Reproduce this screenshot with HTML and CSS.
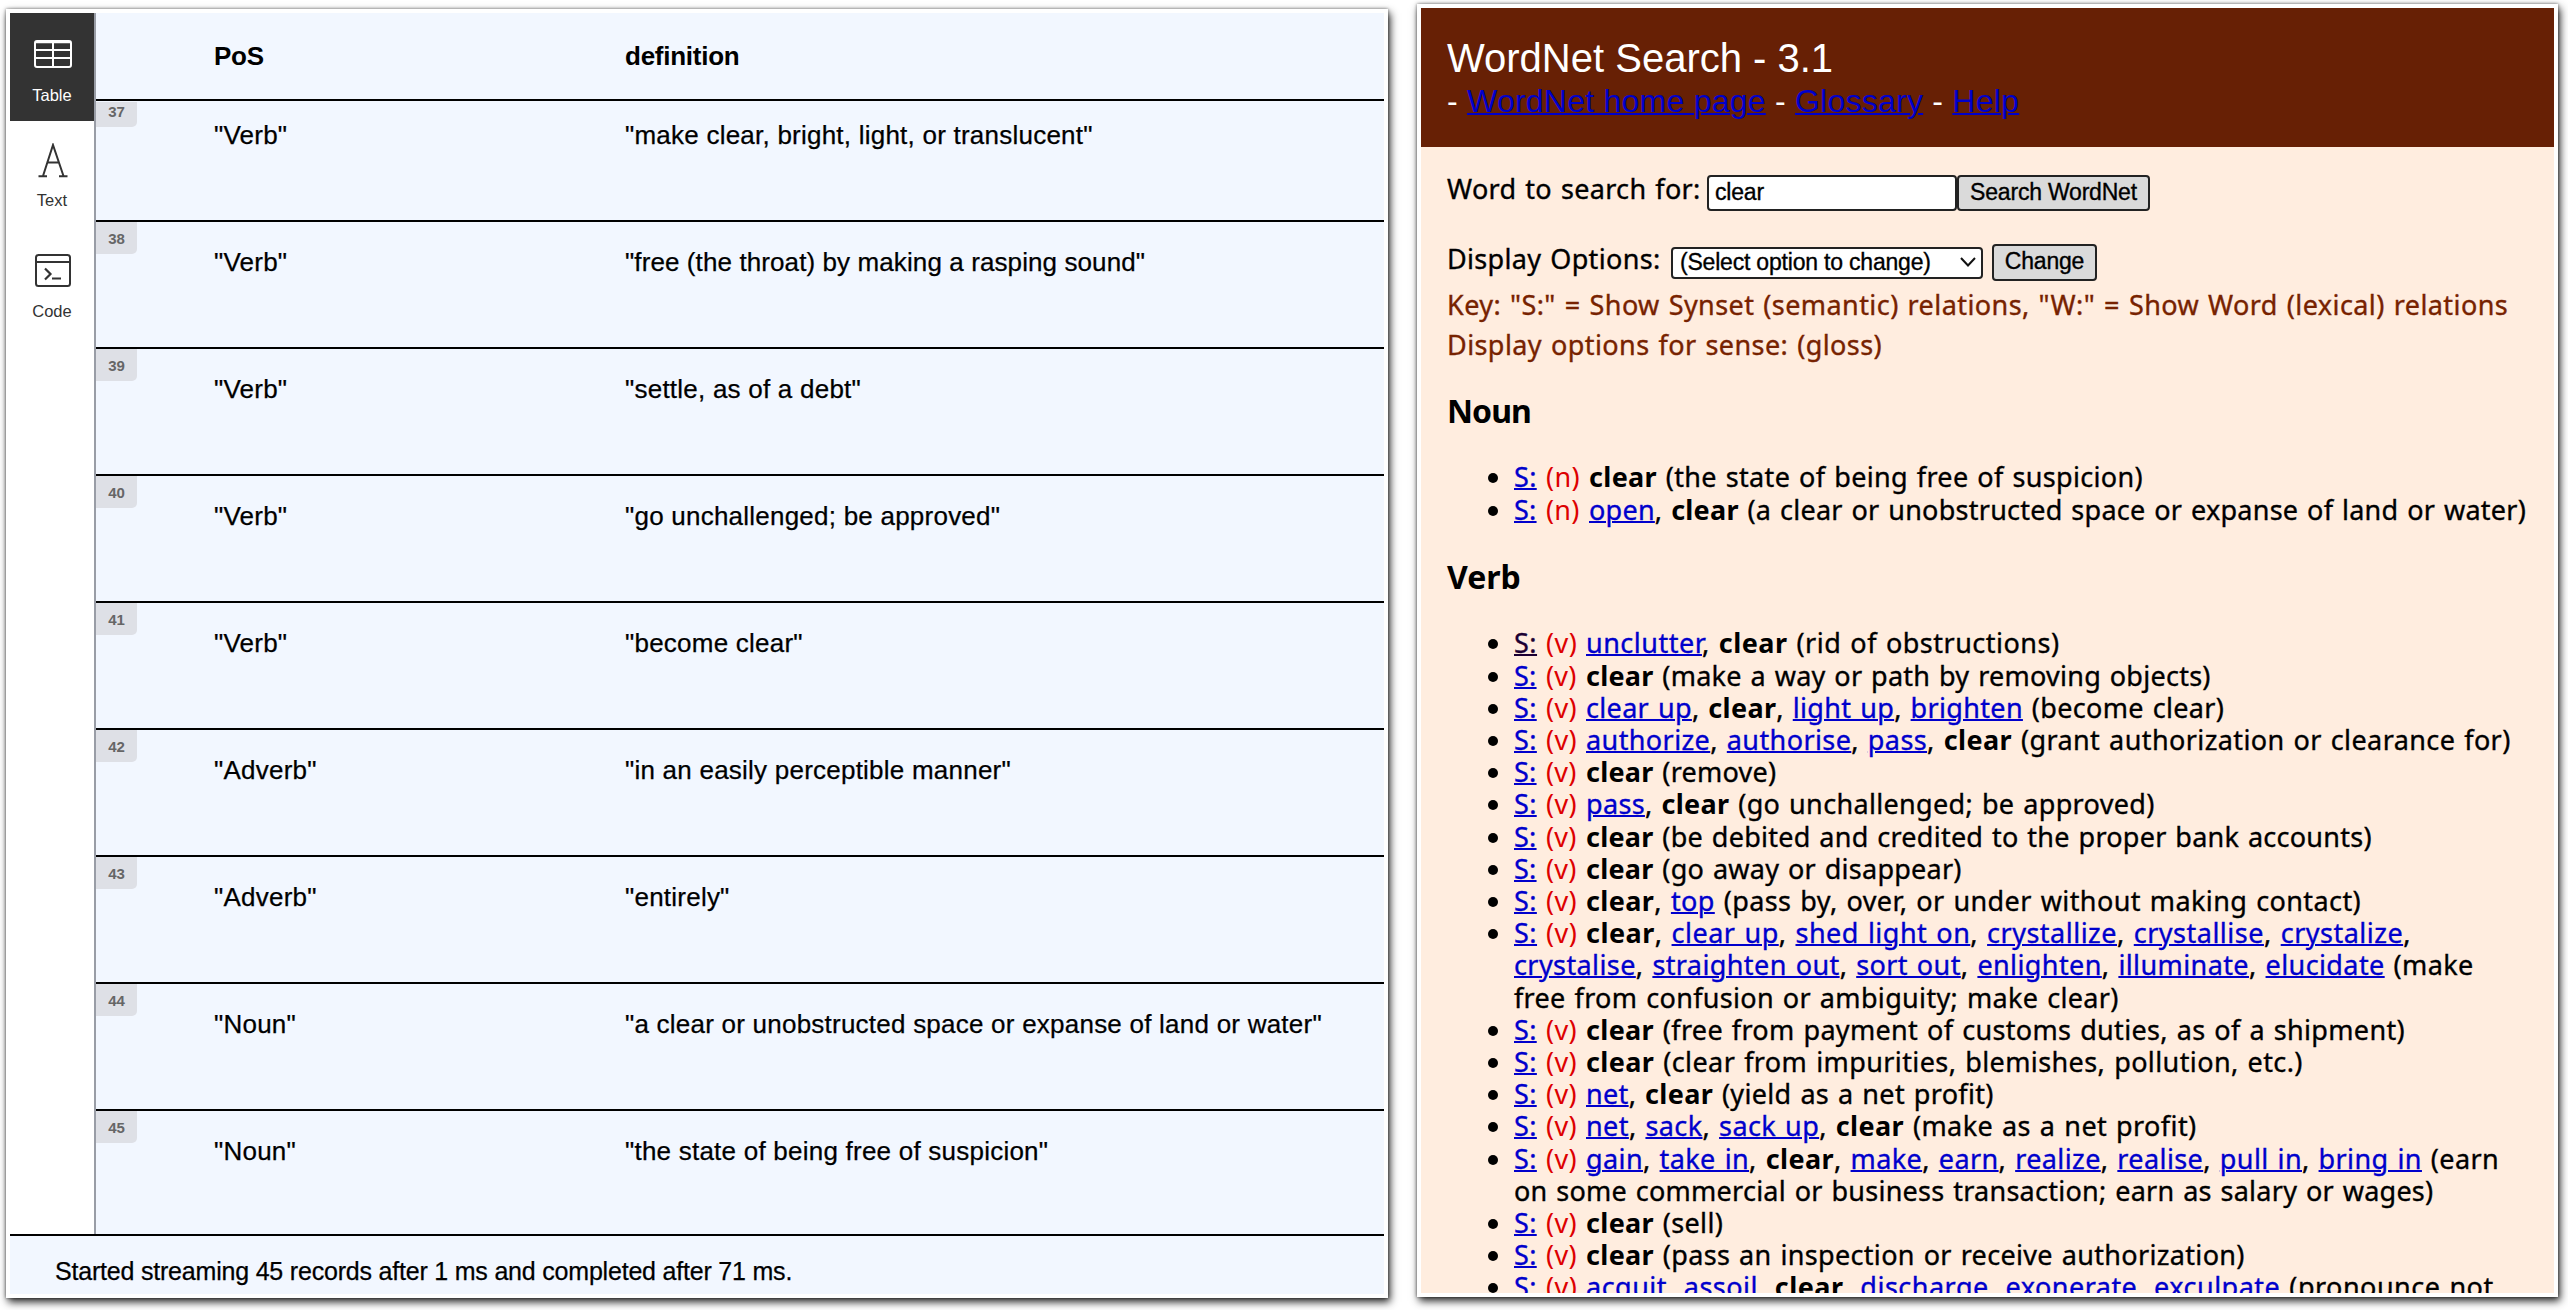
FILE: index.html
```html
<!DOCTYPE html>
<html lang="en">
<head>
<meta charset="utf-8">
<title>Query results and WordNet Search</title>
<link rel="stylesheet" href="styles.css">
</head>
<body>
<main class="stage">
<section class="frame frame-results">
  <div class="results">
    <nav class="tabs">
      <div class="tab tab-active"><svg class="ico ico-table" viewBox="0 0 38 28"><rect x="1" y="1" width="36" height="26" rx="2" fill="none" stroke="#fff" stroke-width="2"/><path d="M1 2.200H37M1 10H37M1 18H37M19 2V27" stroke="#fff" stroke-width="2" fill="none"/></svg><span>Table</span></div>
      <div class="tab tab-text"><svg class="ico ico-text" viewBox="0 0 30 35"><path d="M5 33L15 2L25.500 33M8.500 19.500H21.500M0.500 33.300H9M21 33.300H29.500" fill="none" stroke="#333" stroke-width="2"/></svg><span>Text</span></div>
      <div class="tab tab-code"><svg class="ico ico-code" viewBox="0 0 36 33"><rect x="1" y="1" width="34" height="31" rx="2.500" fill="none" stroke="#333" stroke-width="2"/><path d="M1 8H35" stroke="#333" stroke-width="2"/><path d="M10 14.500L15.500 20L10 25.500M17 24.500H26" fill="none" stroke="#333" stroke-width="2.200"/></svg><span>Code</span></div>
    </nav>
    <div class="grid">
      <div class="row head"><span class="num"></span><b class="pos">PoS</b><b class="def">definition</b></div>
      <div class="row first"><span class="num"><i>37</i></span><span class="pos">"Verb"</span><span class="def">"make clear, bright, light, or translucent"</span></div>
      <div class="row"><span class="num"><i>38</i></span><span class="pos">"Verb"</span><span class="def snug">"free (the throat) by making a rasping sound"</span></div>
      <div class="row"><span class="num"><i>39</i></span><span class="pos">"Verb"</span><span class="def">"settle, as of a debt"</span></div>
      <div class="row"><span class="num"><i>40</i></span><span class="pos">"Verb"</span><span class="def">"go unchallenged; be approved"</span></div>
      <div class="row"><span class="num"><i>41</i></span><span class="pos">"Verb"</span><span class="def">"become clear"</span></div>
      <div class="row"><span class="num"><i>42</i></span><span class="pos">"Adverb"</span><span class="def">"in an easily perceptible manner"</span></div>
      <div class="row"><span class="num"><i>43</i></span><span class="pos">"Adverb"</span><span class="def">"entirely"</span></div>
      <div class="row"><span class="num"><i>44</i></span><span class="pos">"Noun"</span><span class="def">"a clear or unobstructed space or expanse of land or water"</span></div>
      <div class="row last"><span class="num"><i>45</i></span><span class="pos">"Noun"</span><span class="def">"the state of being free of suspicion"</span></div>
    </div>
  </div>
  <footer class="status">Started streaming 45 records after 1 ms and completed after 71 ms.</footer>
</section>

<section class="frame frame-wordnet">
  <header class="wn-head">
    <h1>WordNet Search - 3.1</h1>
    <p>- <a>WordNet home page</a> - <a>Glossary</a> - <a>Help</a></p>
  </header>
  <div class="wn-body">
    <div class="form search"><label>Word to search for:</label><span class="input">clear</span><span class="btn">Search WordNet</span></div>
    <div class="form options"><label>Display Options:</label><span class="select"><span>(Select option to change)</span><svg class="chev" viewBox="0 0 16 10"><path d="M1 1L8 8.500L15 1" fill="none" stroke="#111" stroke-width="2"/></svg></span><span class="btn btn-change">Change</span></div>
    <p class="key">Key: "S:" = Show Synset (semantic) relations, "W:" = Show Word (lexical) relations</p>
    <p class="key">Display options for sense: (gloss)</p>
    <h3 class="noun-title">Noun</h3>
    <ul class="noun">
      <li><i class="s"><a>S:</a></i><i class="t">(n)</i><b>clear</b> (the state of being free of suspicion)</li>
      <li class="tight"><i class="s"><a>S:</a></i><i class="t">(n)</i><a>open</a>, <b>clear</b> (a clear or unobstructed space or expanse of land or water)</li>
    </ul>
    <h3>Verb</h3>
    <ul class="verb">
      <li class="wide"><i class="s"><a class="visited">S:</a></i><i class="t">(v)</i><a>unclutter</a>, <b>clear</b> (rid of obstructions)</li>
      <li class="tight"><i class="s"><a>S:</a></i><i class="t">(v)</i><b>clear</b> (make a way or path by removing objects)</li>
      <li><i class="s"><a>S:</a></i><i class="t">(v)</i><a>clear up</a>, <b>clear</b>, <a>light up</a>, <a>brighten</a> (become clear)</li>
      <li class="loose"><i class="s"><a>S:</a></i><i class="t">(v)</i><a>authorize</a>, <a>authorise</a>, <a>pass</a>, <b>clear</b> (grant authorization or clearance for)</li>
      <li class="tight"><i class="s"><a>S:</a></i><i class="t">(v)</i><b>clear</b> (remove)</li>
      <li><i class="s"><a>S:</a></i><i class="t">(v)</i><a>pass</a>, <b>clear</b> (go unchallenged; be approved)</li>
      <li class="tight"><i class="s"><a>S:</a></i><i class="t">(v)</i><b>clear</b> (be debited and credited to the proper bank accounts)</li>
      <li class="tight"><i class="s"><a>S:</a></i><i class="t">(v)</i><b>clear</b> (go away or disappear)</li>
      <li class="loose"><i class="s"><a>S:</a></i><i class="t">(v)</i><b>clear</b>, <a>top</a> (pass by, over, or under without making contact)</li>
      <li><span class="wide"><i class="s"><a>S:</a></i><i class="t">(v)</i><b>clear</b>, <a>clear up</a>, <a>shed light on</a>, <a>crystallize</a>, <a>crystallise</a>, <a>crystalize</a>,</span><br><span class="loose"><a>crystalise</a>, <a>straighten out</a>, <a>sort out</a>, <a>enlighten</a>, <a>illuminate</a>, <a>elucidate</a> (make</span><br>free from confusion or ambiguity; make clear)</li>
      <li><i class="s"><a>S:</a></i><i class="t">(v)</i><b>clear</b> (free from payment of customs duties, as of a shipment)</li>
      <li class="loose"><i class="s"><a>S:</a></i><i class="t">(v)</i><b>clear</b> (clear from impurities, blemishes, pollution, etc.)</li>
      <li><i class="s"><a>S:</a></i><i class="t">(v)</i><a>net</a>, <b>clear</b> (yield as a net profit)</li>
      <li class="loose"><i class="s"><a>S:</a></i><i class="t">(v)</i><a>net</a>, <a>sack</a>, <a>sack up</a>, <b>clear</b> (make as a net profit)</li>
      <li><span class="loose"><i class="s"><a>S:</a></i><i class="t">(v)</i><a>gain</a>, <a>take in</a>, <b>clear</b>, <a>make</a>, <a>earn</a>, <a>realize</a>, <a>realise</a>, <a>pull in</a>, <a>bring in</a> (earn</span><br><span class="tight">on some commercial or business transaction; earn as salary or wages)</span></li>
      <li><i class="s"><a>S:</a></i><i class="t">(v)</i><b>clear</b> (sell)</li>
      <li><i class="s"><a>S:</a></i><i class="t">(v)</i><b>clear</b> (pass an inspection or receive authorization)</li>
      <li class="wide"><i class="s"><a>S:</a></i><i class="t">(v)</i><a>acquit</a>, <a>assoil</a>, <b>clear</b>, <a>discharge</a>, <a>exonerate</a>, <a>exculpate</a> (pronounce not</li>
    </ul>
  </div>
</section>
</main>
</body>
</html>
```
FILE: styles.css
```css
* { box-sizing: border-box; }
body { margin: 0; background: #fff; font-family: "Liberation Sans", Arial, sans-serif; color: #000; }
.stage { display: flex; width: 2568px; height: 1310px; align-items: flex-start; overflow: hidden; }
.frame { border: 4px solid #fff; background: #fff; box-shadow: 2px 4px 8px rgba(0,0,0,.85), 0 0 3px rgba(0,0,0,.5); display: flex; flex-direction: column; overflow: hidden; }
.frame-results { margin: 9px 0 0 6px; width: 1382px; height: 1289px; }
.frame-wordnet { margin: 4px 0 0 29px; width: 1141px; height: 1293px; font-family: "Noto Sans", "Open Sans", sans-serif; }

/* Query result panel */
.results { display: flex; height: 1221px; }
.tabs { width: 86px; border-right: 2px solid #999da6; display: flex; flex-direction: column; background: #fff; }
.tab { display: flex; flex-direction: column; align-items: center; font-size: 16.500px; line-height: 20px; color: #333; }
.tab-active { background: #333; color: #fff; height: 108px; padding-top: 27px; }
.ico { display: block; margin-left: 2px; }
.ico-table { width: 38px; height: 28px; margin-bottom: 17px; }
.ico-text { width: 30px; height: 35px; margin-bottom: 12px; }
.ico-code { width: 36px; height: 33px; margin-bottom: 14px; }
.tab-text { padding-top: 22px; height: 133px; }
.grid { flex: 1; background: #f2f7ff; font-size: 26px; line-height: 30px; letter-spacing: .23px; -webkit-text-stroke: .25px; }
.row { display: flex; height: 127px; border-bottom: 2px solid #000; padding-top: 25px; }
.num { width: 118px; margin-top: -25px; }
.num i { display: block; width: 41px; height: 32px; border-radius: 0 0 5px 0; background: #dee0e6; color: #666; font: bold 15px/34px "Liberation Sans", sans-serif; letter-spacing: 0; text-align: center; -webkit-text-stroke: 0; }
.pos { width: 411px; }
.snug { letter-spacing: .1px; }
.head { height: 88px; padding-top: 28px; letter-spacing: -.25px; -webkit-text-stroke: 0; }
.first { height: 121px; padding-top: 19px; }
.first .num { margin-top: -18px; }
.first .num i { height: 25px; line-height: 20px; }
.last { border-bottom: 0; }
.status { flex: 1; border-top: 2px solid #000; background: #f2f7ff; padding: 18px 0 0 45px; font-size: 25px; line-height: 34px; letter-spacing: -.2px; -webkit-text-stroke: .25px; }

/* WordNet panel */
.wn-head { height: 139px; background: #672005; color: #fff; padding: 27px 26px 0; font-family: "Liberation Sans", Arial, sans-serif; }
.wn-head h1 { margin: 0; font-size: 40px; font-weight: 400; line-height: 46px; }
.wn-head p { margin: 0; font-size: 32px; line-height: 40px; letter-spacing: .24px; }
.wn-body { flex: 1; background: #ffeddf; padding: 28px 0 0 26px; font-size: 27px; line-height: 32.200px; letter-spacing: .33px; word-spacing: 1.500px; overflow: hidden; white-space: nowrap; -webkit-text-stroke: .35px; }
a { color: #0000cc; text-decoration: underline; text-decoration-thickness: 2px; }
a.visited { color: #1b0033; }
.form { display: flex; align-items: center; }
.search { height: 36px; }
.options { height: 37px; margin-top: 33px; }
label { padding-bottom: 7px; }
.search label { width: 260px; }
.options label { width: 224px; }
.input, .select, .btn { border: 2px solid #222; border-radius: 4px; background: #fff; font-family: "Liberation Sans", Arial, sans-serif; font-size: 23px; line-height: 30px; letter-spacing: -.2px; word-spacing: 0; }
.input { width: 250px; height: 36px; padding-left: 6px; }
.btn { background: #dadada; height: 36px; width: 193px; text-align: center; }
.select { display: flex; align-items: center; justify-content: space-between; width: 312px; height: 32px; padding: 0 5px 2px 7px; }
.chev { width: 16px; height: 10px; }
.btn-change { width: 105px; margin-left: 9px; height: 37px; }
.key { margin: 0; color: #772200; line-height: 40px; letter-spacing: .42px; }
.options + .key { margin-top: 3.500px; }
h3 { margin: 30.800px 0 0; font-size: 32px; line-height: 40px; letter-spacing: 0; -webkit-text-stroke: 0; }
.noun-title { margin-top: 26.800px; letter-spacing: -.9px; }
ul { margin: 30px 0 0; padding: 0 0 0 67px; }
.verb { margin-top: 30.800px; }
b { -webkit-text-stroke: 0; }
i { font-style: normal; }
.s { display: inline-block; width: 32px; }
.t { display: inline-block; width: 40px; color: #d00; -webkit-text-stroke: 0; }
.noun .t { width: 43px; }

/* Tracking steps for the sense lines */
.tight { letter-spacing: .25px; }
.loose { letter-spacing: .4px; }
.wide { letter-spacing: .49px; }
```
